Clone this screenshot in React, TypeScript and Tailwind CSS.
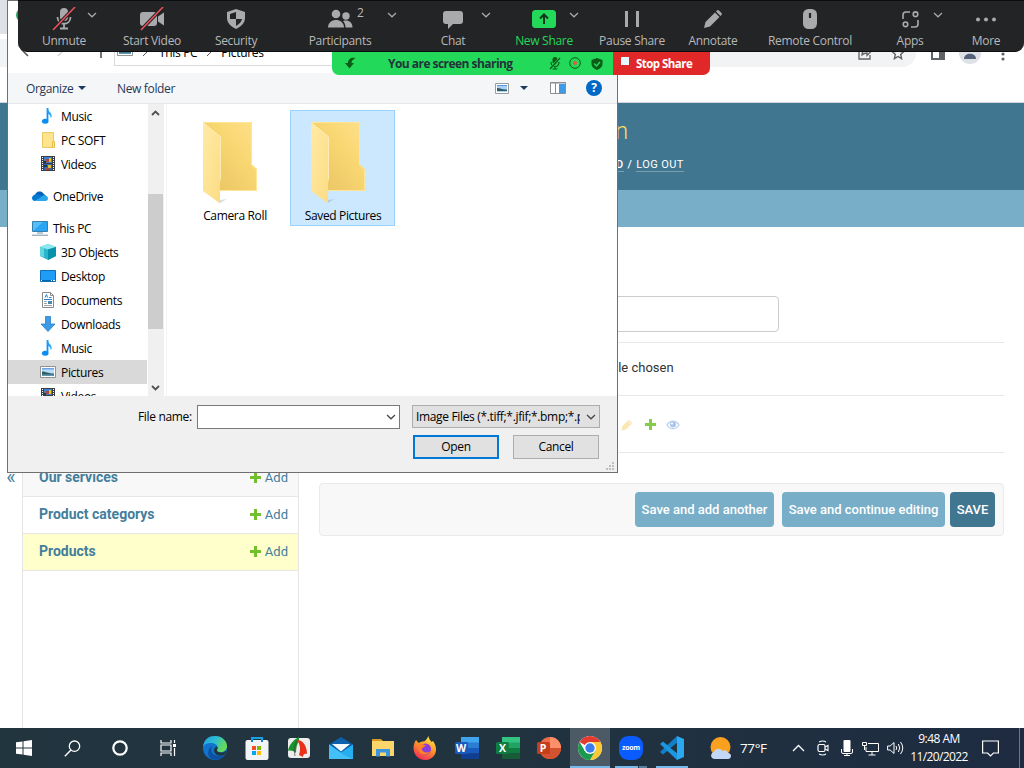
import React from "react";

type Kids = { children?: React.ReactNode };

/* ---------- small shared drawings ---------- */

const Svg = ({ w, h, box, children, className = "" }: Kids & { w: number; h: number; box?: string; className?: string }) => (
  <svg width={w} height={h} viewBox={box ?? `0 0 ${w} ${h}`} className={`block shrink-0 ${className}`} fill="none">
    {children}
  </svg>
);

const Chevron = ({ className = "" }: { className?: string }) => (
  <Svg w={10} h={6} className={className}>
    <path d="M1 1l4 3.800L9 1" stroke="currentColor" strokeWidth="1.200" />
  </Svg>
);

const GreenPlus = () => (
  <Svg w={11} h={11}>
    <path d="M4 0h3v4h4v3H7v4H4V7H0V4h4z" fill="#70bf2b" />
  </Svg>
);

/* ---------- browser chrome and admin page ---------- */

const BrowserChrome = () => (
  <div className="flex h-[103px] shrink-0 flex-col border-b border-[#d9d5dc] bg-white">
    <div className="h-[34px] bg-[#dee1e6]" />
    <div className="flex h-9 items-center pt-0.5">
      <div className="flex h-7 w-[916px] items-center justify-end rounded-r-full bg-[#f1f3f4] pr-[11px]">
        <Svg w={14} h={14} className="mr-[19px]">
          <path d="M4 1.500H1v11.500h11V9M4 9c0-3 2-5 5-5V1.500l4 4-4 4V7C7 7 5.500 7.500 4 9z" stroke="#5f6368" strokeWidth="1.300" />
        </Svg>
        <Svg w={14} h={14}>
          <path d="M7 1.500l1.700 3.800 4.100.4-3.100 2.800.9 4.200L7 10.500l-3.600 2.200.9-4.200L1.200 5.700l4.100-.4z" stroke="#5f6368" strokeWidth="1.400" />
        </Svg>
      </div>
      <Svg w={14} h={13} className="ml-[15px]">
        <rect x="1" y="1" width="12" height="11" stroke="#5f6368" strokeWidth="2" />
        <path d="M8 1h5v11H8z" fill="#5f6368" />
      </Svg>
      <Svg w={22} h={22} className="ml-[14px]">
        <circle cx="11" cy="11" r="11" fill="#dee1e6" />
        <path d="M5 17c0-7 12-7 12 0z" fill="#56617a" />
        <circle cx="11" cy="7" r="3" fill="#56617a" />
      </Svg>
      <Svg w={4} h={14} className="ml-[20px] mt-0.5">
        <circle cx="2" cy="2" r="1.600" fill="#5f6368" />
        <circle cx="2" cy="7" r="1.600" fill="#5f6368" />
        <circle cx="2" cy="12" r="1.600" fill="#5f6368" />
      </Svg>
    </div>
  </div>
);

const ModelRow = ({ name, bg }: { name: string; bg: string }) => (
  <div className={`flex h-[37px] items-center border-b border-[#e6e6e6] pb-px pl-4 pr-[10px] ${bg}`}>
    <span className="pb-0.5 text-sm font-bold leading-5 text-[#447e9b]">{name}</span>
    <span className="ml-auto flex items-center gap-1 text-[13px] text-[#447e9b]">
      <GreenPlus />
      Add
    </span>
  </div>
);

const AdminPage = () => (
  <div className="flex min-h-0 flex-1 flex-col font-['Roboto',sans-serif]">
    <header className="flex h-[87px] shrink-0 flex-col bg-[#417690]">
      <div className="pl-[615px] pt-[11px] text-2xl font-light leading-[34px] text-[#f5dd5d]">n</div>
      <div className="flex gap-1 pl-[616px] pt-[10px] text-[11px] leading-[13px] tracking-[0.4px] text-white">
        <span className="border-b border-[#7a9fb1] font-medium">D</span>
        <span className="font-medium">/</span>
        <span className="border-b border-[#7a9fb1]">LOG OUT</span>
      </div>
    </header>
    <div className="h-[37px] shrink-0 bg-[#79aec8]" />
    <div className="flex min-h-0 flex-1">
      <div className="w-[22px] pt-[238px] text-center text-xl leading-6 text-[#447e9b]">«</div>
      <nav className="w-[277px] border-x border-[#e6e6e6] pt-[233px]">
        <ModelRow name="Our services" bg="bg-[#f8f8f8]" />
        <ModelRow name="Product categorys" bg="bg-white" />
        <ModelRow name="Products" bg="bg-[#ffffcc]" />
      </nav>
      <main className="flex flex-1 flex-col pl-5 pr-5 pt-[69px] text-[13px] text-[#333]">
        <div className="h-[47px] border-b border-[#e8e8e8]">
          <div className="h-9 w-[460px] rounded border border-[#ccc]" />
        </div>
        <div className="h-[53px] border-b border-[#e8e8e8] pl-[296px] pt-[15px] leading-5">ile chosen</div>
        <div className="flex h-[57px] items-center gap-3 border-b border-[#e8e8e8] pl-[302px] pt-px">
          <Svg w={12} h={12}>
            <path d="M.5 11.500l1-4.500 6.500-6.500 3.500 3.500L5 10.500z" fill="#fbe6b4" />
            <path d="M7 1.500L10.500 5" stroke="#fff" strokeWidth=".8" />
          </Svg>
          <Svg w={11} h={11}>
            <path d="M4 0h3v4h4v3H7v4H4V7H0V4h4z" fill="#86cc4b" />
          </Svg>
          <Svg w={14} h={12} className="-ml-0.5">
            <path d="M1 6c3-5 9-5 12 0-3 5-9 5-12 0z" stroke="#bdd3ee" strokeWidth="1.300" />
            <circle cx="7" cy="5.500" r="3" fill="#a9c6ea" />
            <circle cx="6" cy="4.500" r="1" fill="#fff" />
          </Svg>
        </div>
        <div className="mt-[30px] flex h-[53px] items-center justify-end rounded border border-[#eaeaea] bg-[#f8f8f8] pr-2 text-[13px] text-white">
          <div className="flex h-[35px] w-[139px] items-center justify-center whitespace-nowrap rounded bg-[#79aec8] pt-px font-medium">Save and add another</div>
          <div className="ml-2 flex h-[35px] w-[163px] items-center justify-center whitespace-nowrap rounded bg-[#79aec8] pt-px font-medium">Save and continue editing</div>
          <div className="ml-[5px] flex h-[35px] w-[45px] items-center justify-center rounded bg-[#417690] pt-px font-medium">SAVE</div>
        </div>
      </main>
    </div>
  </div>
);

/* ---------- file dialog ---------- */

const MusicIcon = () => (
  <Svg w={16} h={16}>
    <path d="M7.500 0v12.500" stroke="#0a93f5" strokeWidth="1.800" />
    <path d="M7.500 0c0 4 5 4.500 3.500 9.500C11 6.500 8.500 6 7.500 5z" fill="#1ba1f7" stroke="#1ba1f7" strokeWidth=".6" />
    <ellipse cx="5.200" cy="13.200" rx="3.300" ry="2.500" fill="#0a8ef0" />
  </Svg>
);
const FolderSmall = () => (
  <Svg w={16} h={16}>
    <path d="M2.500.5h11v15h-11z" fill="#ffe48f" stroke="#edc85e" />
    <path d="M12.500 9.500h2v6h-2z" fill="#ffe9a3" stroke="#e6bd4c" />
  </Svg>
);
const VideoIcon = () => (
  <Svg w={16} h={16}>
    <path d="M1 0h14v15H1z" fill="#3b3d44" />
    <path d="M2.500 1v14M13.500 1v14" stroke="#fff" strokeWidth="1" strokeDasharray="1 1" />
    <path d="M4 1h8v6H4z" fill="#3e7fd0" />
    <path d="M4 8h8v6H4z" fill="#2f66bb" />
    <path d="M6 3h3v3H6zM5 12h4v2H5z" fill="#a8493c" />
    <path d="M9 2h2v4H9zM8 9h3v3H8z" fill="#ddc23c" />
    <path d="M4 5h2v2H4zM4 9h3v2H4z" fill="#23333f" />
  </Svg>
);
const CloudIcon = () => (
  <Svg w={16} h={16}>
    <path d="M3 8c0-4 5-6 8-3l3 3-6 4z" fill="#0364b8" />
    <path d="M3.500 6.500C1 7 0 8.500 0 10c0 2 1.500 3 3 3l8-4C9 7 6 5.500 3.500 6.500z" fill="#0078d4" />
    <path d="M11 7.500c3-.7 5 1 5 3 0 1.500-1 2.500-2.500 2.500H3l6-4z" fill="#28a8ea" />
  </Svg>
);
const PcIcon = () => (
  <Svg w={16} h={16}>
    <path d="M.5 1.500h15v10H.5z" fill="#56bdf8" stroke="#3680b0" />
    <path d="M1 11L11 2h4v9z" fill="#2ba5f3" />
    <path d="M5 13h6M0 15.200h16" stroke="#7b93a3" />
  </Svg>
);
const CubeIcon = () => (
  <Svg w={16} h={16}>
    <path d="M0 3l8-3 8 3v9l-8 4-8-4z" fill="#2bb5cb" />
    <path d="M0 3l8-3 8 3-8 2.500z" fill="#8ce9ef" />
    <path d="M8 5.500L16 3v9l-8 4z" fill="#0792aa" />
    <path d="M0 3l4 1.500V13l-4-1z" fill="#67d5df" />
  </Svg>
);
const DesktopIcon = () => (
  <Svg w={16} h={16}>
    <path d="M.5 2.500h15v11H.5z" fill="#1e9cf6" stroke="#0870bb" />
    <path d="M1 12.500h14" stroke="#0665a8" />
    <path d="M1 12.500h1M11 12.500h1M13 12.500h2" stroke="#fff" />
  </Svg>
);
const DocIcon = () => (
  <Svg w={16} h={16}>
    <path d="M2.500.5h8l3 3v12h-11z" fill="#fff" stroke="#8a8a8a" />
    <path d="M10.500.5v3h3" stroke="#8a8a8a" />
    <path d="M5 5.500l1.500-3 1 3M9 5.500h2.500M4 7.500h8" stroke="#2680d0" />
    <path d="M4 9.500h3M4 11.500h3M4 13.500h8" stroke="#9aa5ad" />
    <path d="M8 9h4v3H8z" fill="#4c8aa8" />
  </Svg>
);
const DownIcon = () => (
  <Svg w={16} h={16}>
    <path d="M5.500.500h5V8H15l-7 7.500L1 8h4.500z" fill="#3d9be6" stroke="#2a7fc9" strokeWidth=".8" />
  </Svg>
);
const PictureIcon = () => (
  <Svg w={16} h={16}>
    <path d="M.5 2.500h15v11H.5z" fill="#fff" stroke="#8f9294" />
    <path d="M2 4h12v8H2z" fill="#b9dcf8" />
    <path d="M2 4h12v1.500H2z" fill="#6ea4e4" />
    <path d="M2 7.500c4 0 6 2 12 2v1.500H2z" fill="#2e5f62" />
    <path d="M2 10.500h12V12H2z" fill="#5e96b4" />
  </Svg>
);

const NavRow = ({ icon, label, root, active, gap }: { icon: React.ReactNode; label: string; root?: boolean; active?: boolean; gap?: boolean }) => (
  <div className={`flex h-6 shrink-0 items-center gap-[5px] ${root ? "pl-6" : "pl-8"} ${active ? "bg-[#d9d9d9]" : ""} ${gap ? "mt-2" : ""}`}>
    {icon}
    <span className="pt-px">{label}</span>
  </div>
);

const BigFolder = ({ id }: { id: string }) => (
  <Svg w={64} h={86} className="-ml-0.5">
    <defs>
      <linearGradient id={`${id}b`} x1="0" y1="1" x2="1" y2="0">
        <stop offset="0" stopColor="#e7c060" />
        <stop offset=".6" stopColor="#f8d772" />
        <stop offset="1" stopColor="#ffe08a" />
      </linearGradient>
      <linearGradient id={`${id}f`} x1="0" y1="0" x2="1" y2="1">
        <stop offset="0" stopColor="#ffeaa6" />
        <stop offset="1" stopColor="#fbdc82" />
      </linearGradient>
      <linearGradient id={`${id}s`} x1="0" y1="0" x2="1" y2="0">
        <stop offset="0" stopColor="#8a9aa8" stopOpacity=".35" />
        <stop offset="1" stopColor="#8a9aa8" stopOpacity="0" />
      </linearGradient>
    </defs>
    <path d="M54 67h8l-7 3zM18 80l7-1-7 4z" fill={`url(#${id}s)`} />
    <path d="M1 2h49v42.500l5 4.500v22H17z" fill={`url(#${id}b)`} />
    <path d="M1.500 2.500h48v42.500l5 4.500v21H18" stroke="#ffe596" />
    <path d="M1 2l18 15v43l-1 3v20.500L1 71z" fill={`url(#${id}f)`} />
    <path d="M1.500 3l17 14v42" stroke="#ffedb5" />
  </Svg>
);

const FolderTile = ({ id, name, selected }: { id: string; name: string; selected?: boolean }) => (
  <div
    className={`flex h-[116px] w-[105px] flex-col items-center border pt-[9px] ${
      selected ? "border-[#99d1ff] bg-[#cce8ff]" : "border-transparent"
    }`}
  >
    <BigFolder id={id} />
    <span className="mt-px whitespace-nowrap pl-px leading-[18px]">{name}</span>
  </div>
);

const FileDialog = () => (
  <div className="absolute left-[7px] top-0 flex h-[473px] w-[611px] flex-col border border-[#6f6f6f] bg-white font-['Open_Sans','Noto_Sans',sans-serif] text-[12px] tracking-[-0.34px] text-black">
    <div className="flex h-[72px] shrink-0 flex-col">
      <Svg w={14} h={14} className="ml-2 mt-[7px]">
        <circle cx="7" cy="7" r="7" fill="#1ea35a" />
      </Svg>
      <div className="mt-[16px] flex items-start pl-[11px]">
        <Svg w={90} h={22}>
          <path d="M9 6L3 12l6 6" stroke="#555" strokeWidth="1.500" />
          <path d="M39 6l6 6-6 6" stroke="#cfcfcf" strokeWidth="1.200" />
          <path d="M82 7v13" stroke="#444" strokeWidth="1.500" />
        </Svg>
        <div className="ml-[5px] flex h-7 w-[420px] items-start border border-[#d9d9d9] pl-0.5 pt-[3px] leading-[20px]">
          <PictureIcon />
          <Svg w={6} h={10} className="ml-[9px] mt-[5px]"><path d="M1 1l4 4-4 4" stroke="#555" /></Svg>
          <span className="ml-[11px] pt-px">This PC</span>
          <Svg w={6} h={10} className="ml-[9px] mt-[5px]"><path d="M1 1l4 4-4 4" stroke="#555" /></Svg>
          <span className="ml-[9px] pt-px">Pictures</span>
        </div>
      </div>
    </div>
    <div className="flex h-[31px] shrink-0 items-center border-b border-[#e8e9ec] bg-[#f5f6f7] text-[#1e395b]">
      <span className="ml-[18px] w-[48px] pt-px">Organize</span>
      <Svg w={8} h={4} className="ml-1"><path d="M0 0h8L4 4z" fill="#1e395b" /></Svg>
      <span className="ml-[31px] pt-px">New folder</span>
      <div className="ml-auto flex items-center pr-[15px]">
        <Svg w={14} h={11}>
          <path d="M.5.5h13v10H.5z" fill="#fff" stroke="#9a9da0" />
          <path d="M2 2h10v7H2z" fill="#a9d2f6" />
          <path d="M2 2h10v1H2z" fill="#5c98de" />
          <path d="M2 5c4 0 5 2 10 1.500V8H2z" fill="#2e5f62" />
        </Svg>
        <Svg w={8} h={4} className="ml-[11px]"><path d="M0 0h8L4 4z" fill="#1e395b" /></Svg>
        <Svg w={16} h={12} className="ml-[22px]">
          <path d="M.5.5h15v11H.5z" fill="#fff" stroke="#8a8f94" />
          <path d="M0 1h16M5.500 1v10" stroke="#8a8f94" />
          <path d="M9 2h6v9H9z" fill="#3e9ae6" />
        </Svg>
        <div className="ml-5 flex size-4 items-center justify-center rounded-full bg-[#0068c6] text-[12px] font-bold leading-none text-white">?</div>
      </div>
    </div>
    <div className="flex h-[292px] shrink-0">
      <div className="flex w-[139px] flex-col overflow-hidden">
        <NavRow icon={<MusicIcon />} label="Music" />
        <NavRow icon={<FolderSmall />} label="PC SOFT" />
        <NavRow icon={<VideoIcon />} label="Videos" />
        <NavRow icon={<CloudIcon />} label="OneDrive" root gap />
        <NavRow icon={<PcIcon />} label="This PC" root gap />
        <NavRow icon={<CubeIcon />} label="3D Objects" />
        <NavRow icon={<DesktopIcon />} label="Desktop" />
        <NavRow icon={<DocIcon />} label="Documents" />
        <NavRow icon={<DownIcon />} label="Downloads" />
        <NavRow icon={<MusicIcon />} label="Music" />
        <NavRow icon={<PictureIcon />} label="Pictures" active />
        <NavRow icon={<VideoIcon />} label="Videos" />
      </div>
      <div className="ml-px flex w-4 flex-col items-center bg-[#f0f0f0] text-[#505050]">
        <Svg w={9} h={6} className="mr-[2px] mt-[6px]"><path d="M1 5l3.500-3.500L8 5" stroke="currentColor" strokeWidth="1.800" /></Svg>
        <div className="mt-[78px] h-[135px] w-[15px] self-start bg-[#cdcdcd]" />
        <Svg w={9} h={6} className="mr-[2px] mt-[56px]"><path d="M1 1l3.500 3.500L8 1" stroke="currentColor" strokeWidth="1.800" /></Svg>
      </div>
      <div className="ml-0.5 flex flex-1 gap-[3px] border-l border-[#f5f5f5] pl-[15px] pt-[6px]">
        <FolderTile id="cam" name="Camera Roll" />
        <FolderTile id="sav" name="Saved Pictures" selected />
      </div>
    </div>
    <div className="relative flex-1 bg-[#f0f0f0] pt-[9px]">
      <div className="flex items-start">
        <span className="ml-[130px] w-[59px] shrink-0 leading-6">File name:</span>
        <div className="flex h-6 w-[203px] shrink-0 items-center justify-end border border-[#7a7a7a] bg-white pr-[3px] text-[#444]">
          <Chevron />
        </div>
        <div className="ml-3 flex h-[23px] w-[188px] shrink-0 items-center border border-[#adadad] bg-[#e1e1e1] pl-[3px] pr-[3px]">
          <span className="w-[164px] overflow-hidden whitespace-nowrap pt-px">Image Files (*.tiff;*.jfif;*.bmp;*.png;*.webp)</span>
          <Chevron className="ml-auto text-[#444]" />
        </div>
      </div>
      <div className="mt-[6px] flex justify-end gap-[14px] pr-[18px]">
        <div className="flex h-6 w-[86px] items-center justify-center border-2 border-[#0078d7] bg-[#e1e1e1]">Open</div>
        <div className="flex h-6 w-[86px] items-center justify-center border border-[#adadad] bg-[#e1e1e1]">Cancel</div>
      </div>
      <Svg w={8} h={8} className="absolute bottom-[2px] right-[3px]">
        <path d="M6 0h2v2H6zM3 3h2v2H3zM6 3h2v2H6zM0 6h2v2H0zM3 6h2v2H3zM6 6h2v2H6z" fill="#bfbfbf" />
      </Svg>
    </div>
  </div>
);

/* ---------- meeting controls ---------- */

const Tool = ({ label, width, chevron, green, children }: Kids & { label: string; width: string; chevron?: string; green?: boolean }) => (
  <div className={`relative flex h-full shrink-0 flex-col items-center ${width}`}>
    <div className="flex h-[22px] items-center">{children}</div>
    <span className={`mt-[2px] whitespace-nowrap text-[12px] leading-[18px] tracking-[-0.3px] ${green ? "text-[#23d959]" : "text-[#b8b8b8]"}`}>{label}</span>
    {chevron && <Chevron className={`absolute top-[4px] text-[#a9a9a9] ${chevron}`} />}
  </div>
);

const G = "#a9aaab";

const MeetingBar = () => (
  <div className="absolute left-[18px] top-0 flex h-[52px] w-[1006px] overflow-hidden rounded-bl-[9px] rounded-br-[9px] border-b border-t border-b-[#0c0d0e] border-t-[#0c0d0e] bg-[#232426] pt-[7px] font-['Open_Sans','Noto_Sans',sans-serif]">
    <Tool label="Unmute" width="w-[92px]" chevron="left-[69px]">
      <Svg w={24} h={24}>
        <rect x="8" y="1" width="8" height="13" rx="4" fill={G} />
        <path d="M5.500 10c0 9 13 9 13 0M12 17v4M8 21.500h8" stroke={G} strokeWidth="1.800" />
        <path d="M1 23L23 0" stroke="#232426" strokeWidth="3.500" />
        <path d="M1 23L23 0" stroke="#f0525a" strokeWidth="1.500" />
      </Svg>
    </Tool>
    <Tool label="Start Video" width="w-[84px]">
      <Svg w={24} h={24}>
        <rect x="0" y="5" width="17" height="14" rx="3" fill={G} />
        <path d="M18 9.500l6-4v13l-6-4z" fill={G} />
        <path d="M1 23L23 0" stroke="#232426" strokeWidth="3.500" />
        <path d="M1 23L23 0" stroke="#f0525a" strokeWidth="1.500" />
      </Svg>
    </Tool>
    <Tool label="Security" width="w-[84px]">
      <Svg w={20} h={22}>
        <path d="M10 1l9 3v6c0 5-4 8.500-9 11C5 18.500 1 15 1 10V4z" fill={G} />
        <path d="M10 4v7H4V6zM10 11h6c-.5 3-3 5-6 7z" fill="#232426" />
      </Svg>
    </Tool>
    <Tool label="Participants" width="w-[124px]" chevron="left-[109px]">
      <Svg w={26} h={20}>
        <circle cx="9" cy="5" r="4.300" fill={G} />
        <path d="M1 18.500c0-10 16-10 16 0z" fill={G} />
        <circle cx="19" cy="7" r="3.700" fill={G} />
        <path d="M18.500 18.500c0-3-1-5-2.500-6.500 5-1.500 9.500 1 9.500 6.500z" fill={G} />
      </Svg>
      <span className="absolute left-[79px] top-[-3px] text-[12px] leading-[16px] text-[#b8b8b8]">2</span>
    </Tool>
    <Tool label="Chat" width="w-[102px]" chevron="left-[79px]">
      <Svg w={20} h={19}>
        <path d="M3 1h14q3 0 3 3v7q0 3-3 3H10l-5 5v-5H3q-3 0-3-3V4q0-3 3-3z" fill={G} />
      </Svg>
    </Tool>
    <Tool label="New Share" width="w-[80px]" chevron="left-[65px]" green>
      <Svg w={24} h={18}>
        <rect width="24" height="18" rx="3.500" fill="#23d959" />
        <path d="M12 14V5M8 8.500L12 4.500l4 4" stroke="#15361f" strokeWidth="2" />
      </Svg>
    </Tool>
    <Tool label="Pause Share" width="w-[96px]">
      <Svg w={14} h={16}>
        <path d="M1.500 0v16M12.500 0v16" stroke={G} strokeWidth="3" />
      </Svg>
    </Tool>
    <Tool label="Annotate" width="w-[66px]">
      <Svg w={18} h={18}>
        <path d="M0 18l1.500-6L11 2.500l4.500 4.500L6 16.500z" fill={G} />
        <path d="M12 1.500l1-1q1-1 2.500.5l1.500 1.500q1.500 1.500.5 2.500l-1 1z" fill={G} />
      </Svg>
    </Tool>
    <Tool label="Remote Control" width="w-[128px]">
      <Svg w={14} h={20}>
        <rect width="14" height="20" rx="5.500" fill={G} />
        <path d="M7 4v5" stroke="#232426" strokeWidth="2.200" />
      </Svg>
    </Tool>
    <Tool label="Apps" width="w-[72px]" chevron="left-[59px]">
      <Svg w={17} h={17}>
        <g stroke={G} strokeWidth="1.600">
          <path d="M1 8V4q0-3 3-3h4M16 9v4q0 3-3 3H9" />
          <circle cx="13.500" cy="3.200" r="2.300" />
          <circle cx="3.500" cy="13.300" r="2.300" />
        </g>
      </Svg>
    </Tool>
    <Tool label="More" width="w-[80px]">
      <Svg w={20} h={5}>
        <circle cx="2" cy="2.500" r="2" fill={G} />
        <circle cx="10" cy="2.500" r="2" fill={G} />
        <circle cx="18" cy="2.500" r="2" fill={G} />
      </Svg>
    </Tool>
  </div>
);

const ShareStatus = () => (
  <div className="absolute left-[332px] top-[50px] flex h-[25px] w-[378px] items-center overflow-hidden rounded-b-[7px] pt-px font-['Open_Sans','Noto_Sans',sans-serif] text-[12px] font-bold tracking-[-0.54px]">
    <div className="flex h-full w-[281px] items-center bg-[#23d959] text-[#21333b]">
      <Svg w={11} h={12} className="ml-[13px]">
        <path d="M10.500 1C6 0 3 2 3 6H0l4.500 5.500L9 6H6.500c0-2 1.500-3.500 4-5z" fill="#0b5c16" />
      </Svg>
      <span className="ml-8 whitespace-nowrap pt-px">You are screen sharing</span>
      <Svg w={12} h={13} className="ml-auto">
        <rect x="3.500" y="0" width="5" height="7" rx="2.500" fill="#0b5c16" />
        <path d="M2 5c0 6 8 6 8 0M6 9v3M3.500 12h5" stroke="#0b5c16" strokeWidth="1.200" />
        <path d="M1 12L11 1" stroke="#23d959" strokeWidth="2.600" />
        <path d="M1 12L11 1" stroke="#0b5c16" strokeWidth="1.200" />
      </Svg>
      <Svg w={12} h={12} className="ml-2">
        <circle cx="6" cy="6" r="5.300" stroke="#0b5c16" />
        <circle cx="6" cy="6" r="2" fill="#e9563c" />
      </Svg>
      <Svg w={12} h={12} className="ml-[10px] mr-[10px] mt-px">
        <path d="M6 0l5.500 2v4c0 3-3 5-5.500 6C3.500 11 .5 9 .5 6V2z" fill="#0b5c16" />
        <path d="M3 5.500l2.500 2.500L9 4" stroke="#23d959" strokeWidth="1.500" />
      </Svg>
    </div>
    <div className="flex h-full flex-1 items-center bg-[#e02828] text-white">
      <div className="mb-1 ml-2 size-2 bg-[#e4fbff]" />
      <span className="ml-[7px] whitespace-nowrap pt-px text-[11.500px]">Stop Share</span>
    </div>
  </div>
);

/* ---------- taskbar ---------- */

const Slot = ({ w, children, className = "" }: Kids & { w: string; className?: string }) => (
  <div className={`relative flex h-full shrink-0 items-center justify-center ${w} ${className}`}>{children}</div>
);

const OfficeLetter = ({ children }: Kids) => (
  <span className="absolute left-0 top-[5px] w-[13px] text-center text-[10.500px] font-bold leading-3 text-white">{children}</span>
);

const OfficeIcon = ({ letter, tones }: { letter: string; tones: [string, string, string, string, string] }) => (
  <div className="relative">
    <Svg w={24} h={22}>
      <path d="M6 0h18v6H6z" fill={tones[0]} />
      <path d="M6 5.500h18V11H6z" fill={tones[1]} />
      <path d="M6 11h18v5.500H6z" fill={tones[2]} />
      <path d="M6 16.500h18V22H6z" fill={tones[3]} />
      <rect x="0" y="5" width="13" height="12" rx="1.500" fill={tones[4]} />
    </Svg>
    <OfficeLetter>{letter}</OfficeLetter>
  </div>
);

const Taskbar = () => (
  <div className="flex h-10 shrink-0 bg-linear-to-r from-[#21353f] via-[#21333f] to-[#1e2b41] font-['Open_Sans','Noto_Sans',sans-serif] text-white">
    <Slot w="w-12">
      <Svg w={16} h={16}>
        <path d="M0 2.300L6.500 1.400v6H0zM7.500 1.200L16 0v7.400H7.500zM0 8.500h6.500v6.100L0 13.700zM7.500 8.500H16V16l-8.500-1.200z" fill="#fff" />
      </Svg>
    </Slot>
    <Slot w="w-12">
      <Svg w={17} h={17}>
        <circle cx="10.500" cy="6.200" r="5.200" stroke="#fff" strokeWidth="1.300" />
        <path d="M7 10L.8 16.200" stroke="#fff" strokeWidth="1.400" />
      </Svg>
    </Slot>
    <Slot w="w-12">
      <Svg w={16} h={16}><circle cx="8" cy="8" r="6.700" stroke="#fff" strokeWidth="2.200" /></Svg>
    </Slot>
    <Slot w="w-12">
      <Svg w={17} h={16}>
        <path d="M1 0v3h10V0M1 16v-3h10v3M1 5h10v6H1zM14.500 0v3M14.500 8v8" stroke="#fff" strokeWidth="1.200" />
        <path d="M13 4h3v3h-3z" fill="#fff" />
      </Svg>
    </Slot>
    <Slot w="w-[46px]">
      <Svg w={24} h={24}>
        <defs>
          <linearGradient id="eg" x1="0" y1="0" x2="1" y2=".4">
            <stop offset="0" stopColor="#219fe5" />
            <stop offset=".55" stopColor="#2dbfce" />
            <stop offset="1" stopColor="#68db55" />
          </linearGradient>
        </defs>
        <circle cx="12" cy="12" r="12" fill="#1273cf" />
        <path d="M0 11C1 3 6 0 12 0c7 0 12 5 12 10 0 4-3 6-6.500 6-3 0-4.500-1.500-3-3C16 9 11 6.500 7.500 7 4 7 1.500 8 0 11z" fill="url(#eg)" />
        <path d="M9 10c-3 6 2 12 12 9 1 0 1.500-.5.5 0-3 4-8 6-13 4C4 21 4 13 9 10z" fill="#0c50a0" />
        <path d="M14 10.500c1.500 2-1 3.500.5 5 2.500 2 6.500 1 9-1l-1.500 4c-6 2.500-11 0-11-4 0-2 1.200-3.500 3-4z" fill="#21353f" />
      </Svg>
    </Slot>
    <Slot w="w-[38px]">
      <Svg w={24} h={24}>
        <path d="M7 6V2h10v4" stroke="#18a2e6" strokeWidth="2" />
        <rect x=".5" y="4" width="23" height="20" rx="2" fill="#f2f3f4" />
        <path d="M7 6V4M17 6V4" stroke="#0f7fc4" strokeWidth="2" />
        <path d="M7 10h4v4H7z" fill="#f25022" />
        <path d="M12 10h4v4h-4z" fill="#7fba00" />
        <path d="M7 15h4v4H7z" fill="#00a4ef" />
        <path d="M12 15h4v4h-4z" fill="#ffb900" />
      </Svg>
    </Slot>
    <Slot w="w-[46px]">
      <Svg w={22} h={22}>
        <rect x="0" y="1" width="22" height="20" rx="3" fill="#ededed" />
        <path d="M11 0C5 3 1 8 0 14c3-1 6 0 8 2C8 11 9 7 11 4z" fill="#18922b" />
        <path d="M9 3c6 0 10 6 10 14-2-1-4 0-4 3l-4-2C13 12 12 7 9 3z" fill="#e9301a" />
        <path d="M9 4C6 9 6 13 7 19" stroke="#444" strokeWidth=".7" />
      </Svg>
    </Slot>
    <Slot w="w-[38px]">
      <Svg w={24} h={22}>
        <path d="M0 7.500L12 0l12 7.500V22H0z" fill="#0c60ad" />
        <path d="M0 7.500l12 8L24 7.500V22H0z" fill="#25aef0" />
        <path d="M0 7.500L15 18l9 4H0z" fill="#50c8fa" opacity=".7" />
        <path d="M3 7h18l-9 7.500z" fill="#f4f9fd" />
      </Svg>
    </Slot>
    <Slot w="w-[46px]">
      <Svg w={22} h={20}>
        <path d="M0 1h9l2 2H0z" fill="#d89a22" />
        <path d="M0 3h22v15H0z" fill="#fdd66b" />
        <path d="M4 18.500V11h14v7.500h-4v-4H8v4z" fill="#3b96dd" />
      </Svg>
    </Slot>
    <Slot w="w-[38px]">
      <Svg w={24} h={24}>
        <defs>
          <linearGradient id="ff" x1=".8" y1="0" x2=".3" y2="1">
            <stop offset="0" stopColor="#fff14f" />
            <stop offset=".45" stopColor="#ff9a26" />
            <stop offset="1" stopColor="#f0285c" />
          </linearGradient>
        </defs>
        <path d="M3 4l2.500 3L9 5.500C12 6 13 4 15.500 0c0 3 2 4 3 6l1.500-1c3 4 4 9 2 13-2 4-6 6-10 6C5 24 .5 18 .5 12 .5 9 1.500 6 3 4z" fill="url(#ff)" />
        <circle cx="12.500" cy="13" r="5.500" fill="#8a3dde" />
        <path d="M5.500 9c2-1 5-1 8 1-3 0-3 2-5 2.500 1 4 5 5 8 3-1 4-10 4-11-1.500z" fill="#ff8326" />
      </Svg>
    </Slot>
    <Slot w="w-[45px]"><OfficeIcon letter="W" tones={["#41a5ee", "#2b7cd3", "#185abd", "#103f91", "#185abd"]} /></Slot>
    <Slot w="w-[38px]"><OfficeIcon letter="X" tones={["#33c481", "#21a366", "#107c41", "#185c37", "#107c41"]} /></Slot>
    <Slot w="w-[43px]">
      <div className="relative">
        <Svg w={24} h={22}>
          <circle cx="13" cy="11" r="11" fill="#ed6c47" />
          <path d="M13 0a11 11 0 0111 11H13z" fill="#ff8f6b" />
          <path d="M2 11h22a11 11 0 01-22 0z" fill="#d35230" />
          <rect x="0" y="5" width="13" height="12" rx="1.500" fill="#c43e1c" />
        </Svg>
        <OfficeLetter>P</OfficeLetter>
      </div>
    </Slot>
    <Slot w="w-10" className="border-b-2 border-[#76b9ed] bg-[#4b5a64]">
      <Svg w={24} h={24} className="mt-0.5">
        <circle cx="12" cy="12" r="12" fill="#fff" />
        <path d="M12 12L1.610 6A12 12 0 0122.390 6z" fill="#e33b2e" />
        <path d="M12 12V6h10.390A12 12 0 0112 24l5.200-9z" fill="#fcc934" />
        <path d="M12 12l5.200 3L12 24A12 12 0 011.610 6l5.200 9z" fill="#1a9a4c" />
        <circle cx="12" cy="12" r="6" fill="#fff" />
        <circle cx="12" cy="12" r="4.700" fill="#3b7ded" />
      </Svg>
    </Slot>
    <Slot w="w-[42px]">
      <div className="flex size-6 items-center justify-center rounded-[9px] bg-[#0b5cff] pb-0.5 text-[7px] font-bold leading-none tracking-[-0.3px]">zoom</div>
      <div className="absolute bottom-0 left-[5px] flex h-0.5 w-8">
        <div className="w-[23px] bg-[#76b9ed]" />
        <div className="ml-px flex-1 bg-[#587f9e]" />
      </div>
    </Slot>
    <Slot w="w-10">
      <Svg w={24} h={24}>
        <path d="M17 0l7 3v18l-7 3z" fill="#2aa8f2" />
        <path d="M17 0v7L3 18.500 0 16z" fill="#1280c8" />
        <path d="M17 24v-7L3 5.500 0 8z" fill="#1b96df" />
        <path d="M17 7v10l-6.500-5z" fill="#21333f" />
      </Svg>
      <div className="absolute bottom-0 left-1 h-0.5 w-8 bg-[#76b9ed]" />
    </Slot>
    <div className="ml-[17px] flex items-center gap-[7px]">
      <Svg w={24} h={24}>
        <circle cx="11.500" cy="11" r="10" fill="#f9a11f" />
        <path d="M6 23c-5 0-5-6-1-7 1-4 7-4 8-1 3-2 6 0 6 2 4 0 4 6 0 6z" fill="#c3d8f7" />
      </Svg>
      <span className="w-[29px] whitespace-nowrap text-[13.500px] tracking-[-0.4px]">77°F</span>
    </div>
    <div className="ml-[23px] flex items-center">
      <Svg w={13} h={8}><path d="M1 7l5.500-5.500L12 7" stroke="#fff" strokeWidth="1.300" /></Svg>
      <Svg w={12} h={16} className="ml-3">
        <rect x="1" y="4.500" width="7" height="7" rx="1.500" stroke="#fff" strokeWidth="1.200" />
        <path d="M8 7l3-1.500v5L8 9M2 2q4-2 7 0M2 14q4 2 7 0" stroke="#fff" strokeWidth="1.100" />
      </Svg>
      <Svg w={12} h={16} className="ml-[12px]">
        <rect x="2.500" y="0" width="7" height="12" rx="1" fill="#fff" />
        <path d="M.5 9v3q0 1.500 1.500 1.500h8q1.500 0 1.500-1.500V9M6 13v3M3 15.500h6" stroke="#fff" />
      </Svg>
      <Svg w={17} h={15} className="ml-[9px]">
        <path d="M6 2.500h10.500v8H4V6M10 11v3M6.500 14h7M.5 1.500h4v3h-4zM2.500 5v4" stroke="#fff" />
      </Svg>
      <Svg w={17} h={14} className="ml-[8px]">
        <path d="M.6 5v4h2.500L7 12.500v-11L3.100 5z" stroke="#fff" />
        <path d="M9 5q1.500 2 0 4M11.300 3q3 4 0 8M13.500 1q4.500 6 0 12" stroke="#fff" />
      </Svg>
    </div>
    <div className="ml-auto flex items-center">
      <div className="flex w-[60px] flex-col items-center whitespace-nowrap pb-px text-[12px] leading-[18px]">
        <span className="tracking-[-0.5px]">9:48 AM</span>
        <span className="tracking-[-0.6px]">11/20/2022</span>
      </div>
      <Svg w={17} h={17} className="ml-[13px] mr-5">
        <path d="M.6 1h15.800v12h-5L8.500 16l-2.900-3h-5z" stroke="#fff" strokeWidth="1.200" />
      </Svg>
      <div className="mr-1 h-10 w-px bg-[#69778a]" />
    </div>
  </div>
);

export default function App() {
  return (
    <div className="relative flex h-[768px] w-[1024px] flex-col overflow-hidden bg-white">
      <BrowserChrome />
      <AdminPage />
      <Taskbar />
      <FileDialog />
      <ShareStatus />
      <MeetingBar />
    </div>
  );
}
